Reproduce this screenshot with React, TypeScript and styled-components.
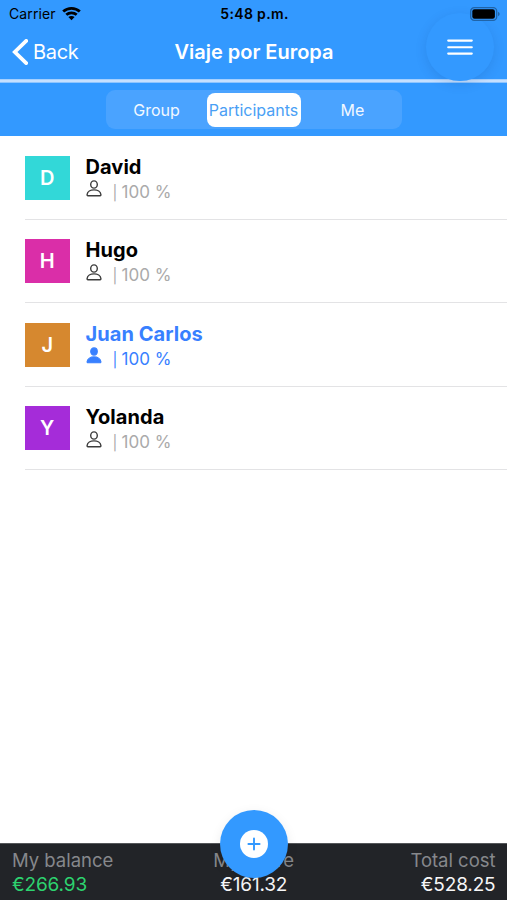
import React from "react";
import styled, { createGlobalStyle } from "styled-components";

const GlobalStyle = createGlobalStyle`
  *, *::before, *::after { box-sizing: border-box; }
  body { margin: 0; background: #fff; overflow: hidden; }
`;

const Screen = styled.div`
  position: relative;
  display: flex;
  flex-direction: column;
  width: 507px;
  height: 900px;
  background: #fff;
  color: #000;
  font-family: Inter, "Liberation Sans", sans-serif;
  overflow: hidden;
  white-space: nowrap;
`;

const Header = styled.header`
  display: flex;
  flex-direction: column;
  height: 136.4px;
  background: #3399ff;
`;

const StatusBar = styled.div`
  position: relative;
  z-index: 2;
  display: grid;
  grid-template-columns: 1fr auto 1fr;
  align-items: center;
  height: 27px;
  padding: 0 7px 0 9px;
  font-size: 14px;
  line-height: 27px;
`;

const CarrierGroup = styled.div`
  display: flex;
  align-items: center;
  gap: 6px;
  letter-spacing: 0.1px;
`;

const Clock = styled.div`
  font-weight: 600;
  letter-spacing: 0.35px;
`;

const BatterySlot = styled.div`
  display: flex;
  justify-content: flex-end;
`;

const NavBar = styled.nav`
  display: grid;
  grid-template-columns: 1fr auto 1fr;
  align-items: center;
  height: 52px;
  padding: 0 11px 2px 12px;
  color: #fff;
  font-size: 20px;
  line-height: 48px;
`;

const BackButton = styled.button`
  display: flex;
  align-items: center;
  gap: 5px;
  padding: 0;
  border: 0;
  background: none;
  color: inherit;
  font: inherit;
  letter-spacing: -0.3px;
`;

const Title = styled.h1`
  margin: 0;
  font-size: 20px;
  font-weight: 600;
  letter-spacing: -0.02px;
`;

const HeaderRule = styled.div`
  height: 4px;
  background: linear-gradient(#a5d0ff 0 1px, #c6e0ff 1px 3px, #8ec5ff 3px);
`;

const SegmentBar = styled.div`
  display: flex;
  justify-content: center;
  padding-top: 7px;
`;

const Segments = styled.div`
  display: grid;
  grid-template-columns: 98px 94px 102px;
  gap: 1px;
  justify-content: start;
  padding: 2.5px 0 2.5px 2px;
  width: 296px;
  height: 39px;
  border-radius: 9px;
  background: #4aa3ff;
`;

const Segment = styled.button<{ $active?: boolean }>`
  height: 34px;
  padding: 0;
  border: 0;
  border-radius: 8px;
  background: ${(p) => (p.$active ? "#fff" : "transparent")};
  color: ${(p) => (p.$active ? "#4a9ff5" : "#f2f8ff")};
  font: 400 16px/34px Inter, sans-serif;
  letter-spacing: 0;
`;

const List = styled.ul`
  flex: 1;
  margin: 0;
  padding: 0 0 0 25px;
  list-style: none;
`;

const Row = styled.li`
  display: flex;
  gap: 16px;
  height: 83.5px;
  padding-top: 19.5px;
  border-bottom: 1px solid #e3e3e5;
`;

const Avatar = styled.div<{ $color: string }>`
  flex: none;
  width: 44.5px;
  height: 44px;
  background: ${(p) => p.$color};
  color: #fff;
  font-size: 20px;
  font-weight: 600;
  line-height: 45px;
  text-align: center;
`;

const Person = styled.div<{ $self?: boolean }>`
  color: ${(p) => (p.$self ? "#3880ff" : "#000")};
`;

const Name = styled.div`
  height: 22px;
  font-size: 20px;
  font-weight: 650;
  line-height: 22px;
  letter-spacing: 0.06px;
`;

const Detail = styled.div<{ $self?: boolean }>`
  display: flex;
  height: 27px;
  color: ${(p) => (p.$self ? "#3880ff" : "#aaaaaa")};
  font-size: 17px;
  line-height: 28px;
`;

const Separator = styled.span`
  width: 9px;
  margin-left: 11px;
  font-size: 14.5px;
  line-height: 29px;
`;

const PersonSvg = styled.svg<{ $self?: boolean }>`
  margin-top: 2.5px;
  flex: none;
  color: ${(p) => (p.$self ? "#3880ff" : "#3c3c3c")};
`;

const Footer = styled.footer`
  display: grid;
  grid-template-columns: 1fr 1fr 1fr;
  height: 57px;
  padding: 4px 11.5px 0 12px;
  border-top: 1px solid #55575a;
  background: #222428;
`;

const Total = styled.div<{ $align: "left" | "center" | "right" }>`
  text-align: ${(p) => p.$align};
`;

const TotalLabel = styled.div`
  color: #86888c;
  font-size: 18.5px;
  line-height: 24px;
  letter-spacing: -0.02px;
`;

const Amount = styled.div<{ $positive?: boolean }>`
  color: ${(p) => (p.$positive ? "#2dd36f" : "#f7f7f8")};
  font-size: 19px;
  line-height: 26px;
  letter-spacing: -0.15px;
`;

const RoundButton = styled.button`
  position: absolute;
  z-index: 1;
  display: flex;
  align-items: center;
  justify-content: center;
  width: 68px;
  height: 68px;
  padding: 0;
  border: 0;
  border-radius: 50%;
  background: #3399ff;
`;

const MenuButton = styled(RoundButton)`
  top: 13px;
  right: 13px;
  box-shadow: 0 3px 12px rgba(0, 40, 100, 0.13);
`;

const AddButton = styled(RoundButton)`
  left: 220px;
  bottom: 22px;
  box-shadow: 0 3px 12px rgba(0, 0, 0, 0.08);
`;

const WifiIcon = () => (
  <svg width="19" height="15" viewBox="0 0 19 15" fill="none" stroke="#000" strokeWidth="2.8">
    <path d="M1.2 5.5C5.8 1.2 13.2 1.2 17.8 5.5" />
    <path d="M4.3 8.8C7.2 6.1 11.8 6.1 14.7 8.8" />
    <path d="M9.5 14.2L6.4 11.1C8.2 9.5 10.8 9.5 12.6 11.1Z" fill="#000" stroke="none" />
  </svg>
);

const BatteryIcon = () => (
  <svg width="30" height="14" viewBox="0 0 30 14">
    <rect x="0.7" y="0.7" width="26" height="12.6" rx="3.6" fill="none" stroke="#2064a8" strokeWidth="1.3" />
    <rect x="2.3" y="2.3" width="22.6" height="9.4" rx="2.2" fill="#000" />
    <path d="M28 4.8Q29.7 5.5 29.7 7T28 9.2Z" fill="#2064a8" />
  </svg>
);

const ChevronIcon = () => (
  <svg width="16" height="26" viewBox="0 0 16 26" fill="none" stroke="#fff" strokeWidth="3.8">
    <path d="M14.2 1.9L2.8 13L14.2 24.1" strokeLinecap="round" />
  </svg>
);

const PersonIcon = ({ self }: { self?: boolean }) => (
  <PersonSvg
    $self={self}
    width="16"
    height="17"
    viewBox="0 0 16 17"
    fill={self ? "currentColor" : "none"}
    stroke="currentColor"
    strokeWidth={self ? 1.1 : 1.4}
    strokeLinejoin="round"
  >
    <ellipse cx="8" cy="4.5" rx="3.3" ry="3.6" />
    <path d="M8 9.9C4.5 9.9 1.4 11.8 1.1 14.6C1 15.3 1.3 15.7 1.9 15.7H14.1C14.7 15.7 15 15.3 14.9 14.6C14.6 11.8 11.5 9.9 8 9.9Z" />
  </PersonSvg>
);

const MenuIcon = () => (
  <svg width="26" height="18" viewBox="0 0 26 18" stroke="#fff" strokeWidth="2.1" strokeLinecap="round">
    <path d="M1.2 2.6H24.8M1.2 9.2H24.8M1.2 15.6H24.8" />
  </svg>
);

const AddIcon = () => (
  <svg width="28" height="28" viewBox="0 0 28 28">
    <circle cx="14" cy="14" r="14" fill="#fff" />
    <path d="M8.4 14H19.6M14 8.4V19.6" stroke="#3399ff" strokeWidth="1.9" strokeLinecap="round" />
  </svg>
);

const people = [
  { name: "David", color: "#32d8d8" },
  { name: "Hugo", color: "#da2ea8" },
  { name: "Juan Carlos", color: "#d6882f", self: true },
  { name: "Yolanda", color: "#a52cd9" },
];

export default function App() {
  return (
    <Screen>
      <GlobalStyle />
      <Header>
        <StatusBar>
          <CarrierGroup>
            Carrier
            <WifiIcon />
          </CarrierGroup>
          <Clock>5:48 p.m.</Clock>
          <BatterySlot>
            <BatteryIcon />
          </BatterySlot>
        </StatusBar>
        <NavBar>
          <BackButton>
            <ChevronIcon />
            Back
          </BackButton>
          <Title>Viaje por Europa</Title>
        </NavBar>
        <HeaderRule />
        <SegmentBar>
          <Segments>
            <Segment>Group</Segment>
            <Segment $active>Participants</Segment>
            <Segment>Me</Segment>
          </Segments>
        </SegmentBar>
      </Header>
      <List>
        {people.map((p) => (
          <Row key={p.name}>
            <Avatar $color={p.color}>{p.name[0]}</Avatar>
            <Person $self={p.self}>
              <Name>{p.name}</Name>
              <Detail $self={p.self}>
                <PersonIcon self={p.self} />
                <Separator>|</Separator>
                <span>100 %</span>
              </Detail>
            </Person>
          </Row>
        ))}
      </List>
      <Footer>
        <Total $align="left">
          <TotalLabel>My balance</TotalLabel>
          <Amount $positive>€266.93</Amount>
        </Total>
        <Total $align="center">
          <TotalLabel>My share</TotalLabel>
          <Amount>€161.32</Amount>
        </Total>
        <Total $align="right">
          <TotalLabel>Total cost</TotalLabel>
          <Amount>€528.25</Amount>
        </Total>
      </Footer>
      <MenuButton aria-label="Menu">
        <MenuIcon />
      </MenuButton>
      <AddButton aria-label="Add">
        <AddIcon />
      </AddButton>
    </Screen>
  );
}
